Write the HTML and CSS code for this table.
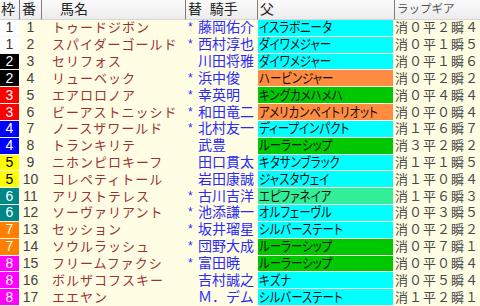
FILE: index.html
```html
<!DOCTYPE html>
<html lang="ja">
<head>
<meta charset="utf-8">
<link rel="stylesheet" href="styles.css">
</head>
<body>
<div class="tbl">
  <div class="h h-waku">枠</div>
  <div class="h h-ban">番</div>
  <div class="h h-name">馬名</div>
  <div class="h h-jky">替&nbsp;&nbsp;騎手</div>
  <div class="h h-sire">父</div>
  <div class="h h-lap">ラップギア</div>

  <div class="c waku w1">1</div><div class="c ban">1</div><div class="c name">トゥードジボン</div><div class="c jky"><span class="mk">*</span>藤岡佑介</div><div class="c sire cy"><span class="sn">イスラボニータ</span></div><div class="c lap">消０平２瞬４</div>
  <div class="c waku w1">1</div><div class="c ban">2</div><div class="c name">スパイダーゴールド</div><div class="c jky"><span class="mk">*</span>西村淳也</div><div class="c sire cy"><span class="sn">ダイワメジャー</span></div><div class="c lap">消０平１瞬５</div>
  <div class="c waku w2">2</div><div class="c ban">3</div><div class="c name">セリフォス</div><div class="c jky"><span class="mk"></span>川田将雅</div><div class="c sire cy"><span class="sn">ダイワメジャー</span></div><div class="c lap">消０平１瞬６</div>
  <div class="c waku w2">2</div><div class="c ban">4</div><div class="c name">リューベック</div><div class="c jky"><span class="mk">*</span>浜中俊</div><div class="c sire or"><span class="sn">ハービンジャー</span></div><div class="c lap">消０平２瞬２</div>
  <div class="c waku w3">3</div><div class="c ban">5</div><div class="c name">エアロロノア</div><div class="c jky"><span class="mk">*</span>幸英明</div><div class="c sire gr"><span class="sn">キングカメハメハ</span></div><div class="c lap">消０平４瞬４</div>
  <div class="c waku w3">3</div><div class="c ban">6</div><div class="c name">ビーアストニッシド</div><div class="c jky"><span class="mk">*</span>和田竜二</div><div class="c sire or"><span class="sn">アメリカンペイトリオット</span></div><div class="c lap">消０平０瞬４</div>
  <div class="c waku w4">4</div><div class="c ban">7</div><div class="c name">ノースザワールド</div><div class="c jky"><span class="mk">*</span>北村友一</div><div class="c sire cy"><span class="sn">ディープインパクト</span></div><div class="c lap">消１平６瞬７</div>
  <div class="c waku w4">4</div><div class="c ban">8</div><div class="c name">トランキリテ</div><div class="c jky"><span class="mk"></span>武豊</div><div class="c sire gr"><span class="sn">ルーラーシップ</span></div><div class="c lap">消３平２瞬２</div>
  <div class="c waku w5">5</div><div class="c ban">9</div><div class="c name">ニホンピロキーフ</div><div class="c jky"><span class="mk"></span>田口貫太</div><div class="c sire cy"><span class="sn">キタサンブラック</span></div><div class="c lap">消１平１瞬５</div>
  <div class="c waku w5">5</div><div class="c ban">10</div><div class="c name">コレペティトール</div><div class="c jky"><span class="mk"></span>岩田康誠</div><div class="c sire cy"><span class="sn">ジャスタウェイ</span></div><div class="c lap">消１平０瞬４</div>
  <div class="c waku w6">6</div><div class="c ban">11</div><div class="c name">アリストテレス</div><div class="c jky"><span class="mk">*</span>古川吉洋</div><div class="c sire sg"><span class="sn">エピファネイア</span></div><div class="c lap">消１平６瞬３</div>
  <div class="c waku w6">6</div><div class="c ban">12</div><div class="c name">ソーヴァリアント</div><div class="c jky"><span class="mk">*</span>池添謙一</div><div class="c sire cy"><span class="sn">オルフェーヴル</span></div><div class="c lap">消０平３瞬５</div>
  <div class="c waku w7">7</div><div class="c ban">13</div><div class="c name">セッション</div><div class="c jky"><span class="mk">*</span>坂井瑠星</div><div class="c sire cy"><span class="sn">シルバーステート</span></div><div class="c lap">消０平２瞬２</div>
  <div class="c waku w7">7</div><div class="c ban">14</div><div class="c name">ソウルラッシュ</div><div class="c jky"><span class="mk">*</span>団野大成</div><div class="c sire gr"><span class="sn">ルーラーシップ</span></div><div class="c lap">消０平７瞬１</div>
  <div class="c waku w8">8</div><div class="c ban">15</div><div class="c name">フリームファクシ</div><div class="c jky"><span class="mk">*</span>富田暁</div><div class="c sire gr"><span class="sn">ルーラーシップ</span></div><div class="c lap">消０平０瞬４</div>
  <div class="c waku w8">8</div><div class="c ban">16</div><div class="c name">ボルザコフスキー</div><div class="c jky"><span class="mk"></span>吉村誠之</div><div class="c sire cy"><span class="sn">キズナ</span></div><div class="c lap">消０平５瞬４</div>
  <div class="c waku w8">8</div><div class="c ban">17</div><div class="c name">エエヤン</div><div class="c jky"><span class="mk"></span>Ｍ．デム</div><div class="c sire cy"><span class="sn">シルバーステート</span></div><div class="c lap">消１平２瞬１</div>
</div>
</body>
</html>
```

FILE: styles.css
```css
html, body {
  margin: 0;
  padding: 0;
  background: #fffde3;
}
.tbl {
  width: 480px;
  height: 306px;
  display: grid;
  grid-template-columns: 19px 22px 144px 72px 137px 86px;
  grid-template-rows: 20px repeat(17, minmax(0, 1fr));
  font-family: "Liberation Sans", "Noto Sans CJK JP", sans-serif;
  overflow: hidden;
}
.h {
  background: linear-gradient(#fbfbfb, #ececec);
  border-bottom: 1px solid #d6d6d6;
  color: #222;
  font-size: 14px;
  line-height: 19px;
  white-space: nowrap;
  overflow: hidden;
  border-left: 1px solid #7c7c7c;
}
.h-waku {
  border-left: none;
  padding-left: 1px;
}
.h-ban {
  padding-left: 2px;
}
.h-name {
  padding-left: 18px;
}
.h-jky {
  padding-left: 2px;
}
.h-sire {
  padding-left: 2px;
}
.h-lap {
  padding-left: 2px;
  font-size: 11.5px;
  color: #555;
}
.c {
  display: flex;
  align-items: center;
  white-space: nowrap;
  overflow: hidden;
  border-bottom: 1px solid #fffde3;
  min-height: 0;
  line-height: 15px;
}
.waku {
  justify-content: center;
  font-size: 14px;
  border-bottom-color: #f4f4f4;
}
.w1 { background: #ffffff; color: #333; }
.w2 { background: #000000; color: #fff; }
.w3 { background: #ff0000; color: #fff; }
.w4 { background: #0000ff; color: #fff; }
.w5 { background: #ffff00; color: #000; }
.w6 { background: #008888; color: #fff; }
.w7 { background: #ff8000; color: #fff; }
.w8 { background: #ff00ff; color: #fff; }
.ban {
  justify-content: center;
  font-size: 14px;
  color: #444;
  padding-left: 1px;
}
.name {
  padding-left: 11px;
  font-size: 13px;
  letter-spacing: 1px;
  color: #9a3232;
}
.jky {
  padding-left: 3px;
  font-size: 14px;
  color: #2a2aff;
}
.mk {
  display: inline-block;
  width: 10px;
  font-size: 12px;
  flex: none;
}
.sire {
  margin-left: 1px;
  margin-right: 1px;
  padding-left: 1px;
  font-size: 13.5px;
  color: #111;
  font-feature-settings: "palt";
}
.sn {
  display: inline-block;
  transform: scaleX(0.85);
  transform-origin: left center;
}
.cy { background: #00ffff; }
.or { background: #ff8c40; }
.gr { background: #00c800; }
.sg { background: #33ee99; }
.lap {
  padding-left: 1px;
  font-size: 13px;
  letter-spacing: 1px;
  color: #484848;
}
```
